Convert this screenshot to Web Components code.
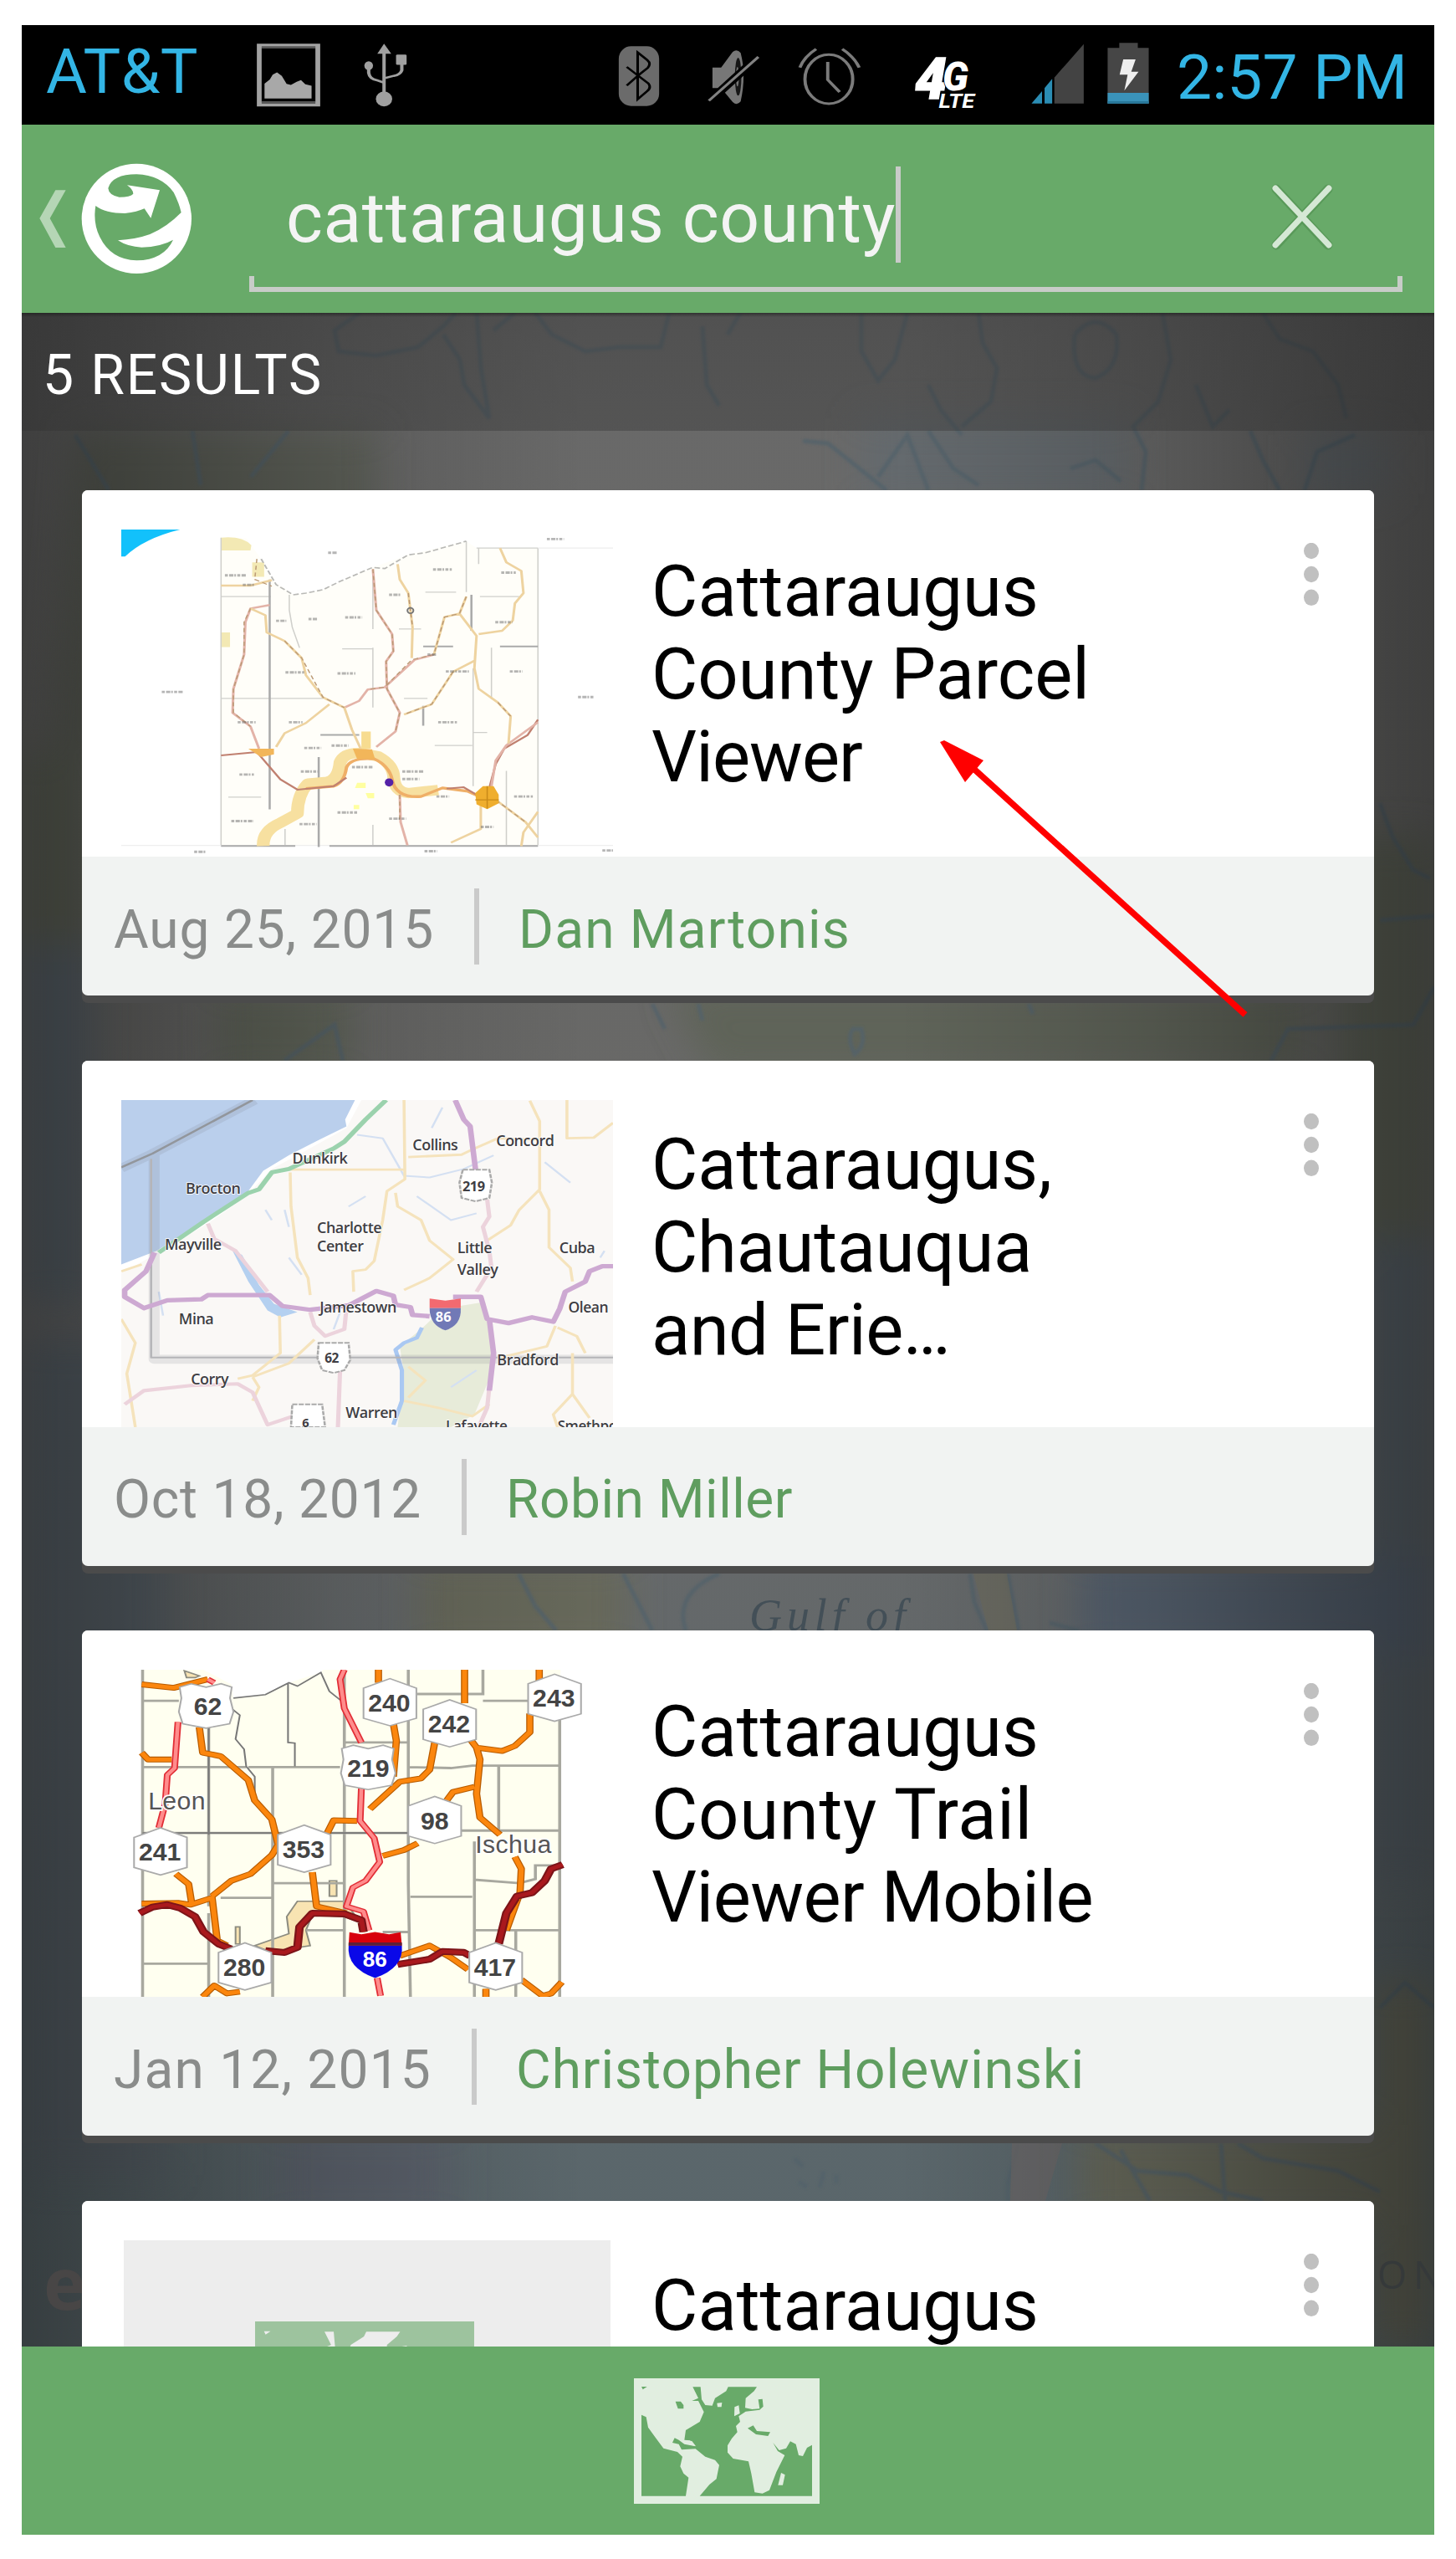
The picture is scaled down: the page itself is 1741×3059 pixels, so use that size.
<!DOCTYPE html>
<html lang="en">
<head>
<meta charset="utf-8">
<title>Search results</title>
<style>
  html, body { margin: 0; background: #fff; }
  body { font-family: Roboto, "Liberation Sans", sans-serif; }
</style>
</head>
<body>
<phone-screen></phone-screen>

<script>
const define = (name, html, after) => {
  const tpl = document.createElement('template');
  tpl.innerHTML = html;
  customElements.define(name, class extends HTMLElement {
    connectedCallback() {
      if (this.shadowRoot) return;
      this.attachShadow({ mode: 'open' }).appendChild(tpl.content.cloneNode(true));
      if (after) after.call(this, this.shadowRoot);
    }
  });
};

/* One line of text, tracked so that it fills the given width. */
define('fit-text', `
<style>
  :host { display: flex; flex: none; line-height: 1; }
  span { display: block; flex: none; white-space: nowrap; line-height: 1; }
</style><span><slot></slot></span>`, function (root) {
  const size = this.getAttribute('size'), width = +this.getAttribute('w');
  this.style.fontSize = size + 'px';
  this.style.width = width + 'px';
  this.style.height = size + 'px';
  const span = root.querySelector('span');
  const gap = (width - span.getBoundingClientRect().width) / this.textContent.length;
  span.style.letterSpacing = gap.toFixed(3) + 'px';
});

define('status-bar', `
<style>
  :host { display: flex; height: 119px; background: #000; align-items: flex-start; color: #33b5e5; }
  svg { flex: none; height: 100px; margin-top: 10px; display: block; }
  .carrier { margin: 18px 0 0 29px; }
  .clock { margin: 25px 0 0 33px; }
  text { font-family: Roboto, sans-serif; font-weight: 900; font-style: italic; fill: #fff; }
</style>
<fit-text class="carrier" size="75" w="182">AT&amp;T</fit-text>
<svg style="margin-left:70px" width="76" viewBox="534.8 112 132.4 280" preserveAspectRatio="none">
  <path fill="#a2a2a2" fill-rule="evenodd" d="M535 146H667V356H535ZM545 161H657V340H545Z"/>
  <path fill="#565656" d="M545 155H657V161H545ZM545 339H657V347H545Z"/>
  <path fill="#a8a8a8" d="M551 330V280L562 266L568 250L577 242L587 254L597 281L606 284L618 274L627 268L636 282L649 287V330Z"/>
</svg>
<svg style="margin-left:52px" width="52" viewBox="757.8 112 90.6 280" preserveAspectRatio="none">
  <g fill="none" stroke="#a0a0a0" stroke-width="7"><path d="M800 165V320M768 222V244Q770 264 784 268L800 277M837 205V235Q834 250 820 254L800 262"/></g>
  <g fill="#a0a0a0"><path d="M800 146L815 180H786Z"/><ellipse cx="768" cy="220" rx="9" ry="15"/><rect x="825" y="183" width="22" height="34" rx="3"/><ellipse cx="800" cy="331" rx="17" ry="25"/></g>
</svg>
<svg style="margin-left:252px" width="50" viewBox="44 0 115 300" preserveAspectRatio="none">
  <rect x="46" y="46" width="111" height="214" rx="34" ry="44" fill="#6b6b6b"/>
  <path fill="none" stroke="#000" stroke-width="7" d="M68 120L98 150L128 180Q136 195 124 207L98 236V68L124 95Q136 108 126 123L98 152L68 187"/>
</svg>
<svg style="margin-left:56px" width="64" viewBox="288 0 148 300" preserveAspectRatio="none">
  <path fill="#777" d="M304 122H328L360 66Q372 54 382 70Q398 150 382 244Q372 260 360 246L328 196H304Z"/>
  <ellipse cx="375" cy="155" rx="9" ry="68" fill="#161616"/><ellipse cx="373" cy="155" rx="4" ry="35" fill="#777"/>
  <path stroke="#000" stroke-width="26" d="M298 240L432 82"/><path stroke="#828282" stroke-width="8" d="M294 241L431 84"/>
</svg>
<svg style="margin-left:44px" width="77" viewBox="537 0 178 300" preserveAspectRatio="none">
  <g fill="none" stroke="#7b7b7b" stroke-width="9"><ellipse cx="625" cy="164" rx="66" ry="88"/><path d="M622 102V166L655 210M545 122Q558 82 590 56M709 122Q694 82 662 56"/></g>
</svg>
<svg style="margin-left:64px" width="80" viewBox="862 0 184.5 300" preserveAspectRatio="none">
  <text transform="translate(862 233) scale(.77 1)" font-size="204" stroke="#fff" stroke-width="4">4</text>
  <text transform="translate(938 203) scale(.74 1)" font-size="146" stroke="#000" stroke-width="5" paint-order="stroke">G</text>
  <text transform="translate(928 268) scale(.9 1)" font-size="70" style="font-weight:700" stroke="#000" stroke-width="6" paint-order="stroke">LTE</text>
</svg>
<svg style="margin-left:58px" width="64" viewBox="1180.7 0 147.6 300" preserveAspectRatio="none">
  <path fill="#434343" d="M1247 251V158L1328 38V251Z"/><path fill="#2b8db4" d="M1184 251L1213 207V251ZM1220 251V196L1241 163V251Z"/>
</svg>
<svg style="margin-left:28px" width="50" viewBox="1393 0 115 300" preserveAspectRatio="none">
  <path fill="#464646" d="M1394 52H1426V34H1477V52H1507V251H1394Z"/><path fill="#3a93ba" d="M1394 213H1507V251H1394Z"/><path fill="#28779a" d="M1394 243H1507V251H1394Z"/>
  <path fill="#eee" d="M1437 93H1471L1459 137H1479L1440 205L1449 148H1427Z"/>
</svg>
<fit-text class="clock" size="75" w="276">2:57 PM</fit-text>`);

define('search-header', `
<style>
  :host { display: flex; height: 225px; background: #68aa69; align-items: flex-start; }
  .logo { width: 215px; height: 220px; margin-top: 1px; flex: none; display: block; }
  .field { width: 1379px; height: 200px; margin-left: 57px; display: flex; flex-direction: column; flex: none; }
  .row { display: flex; flex: 1; align-items: flex-start; }
  .row fit-text { margin: 70px 0 0 44px; color: #f4f4f4; }
  .caret { width: 6px; height: 115px; margin-top: 50px; background: #c9cbc9; }
  .line { box-sizing: border-box; height: 19px; border: 6px solid #c8ccc8; border-top: 0; }
  .clear { width: 90px; height: 95px; margin: 60px 75px 0 auto; }
</style>
<svg class="logo" viewBox="0 0 645 660">
  <path fill="#b5d6b5" d="M121 232H158L101 333L158 438H121L64 333Z"/>
  <circle cx="412" cy="334" r="197" fill="#fff"/>
  <path fill="#68aa69" d="M265 288Q300 315 370 315Q415 310 440 298L463 332L495 232L378 214Q400 230 400 245Q390 257 350 257Q312 250 310 225Q325 175 412 175Q500 178 545 240Q565 280 572 312Q520 365 460 390Q410 408 345 412Q380 435 430 437Q500 435 543 410Q510 482 412 484Q320 482 280 400Q255 350 265 288Z"/>
</svg>
<div class="field">
  <div class="row">
    <fit-text size="84" w="729">cattaraugus county</fit-text><div class="caret"></div>
    <svg class="clear" viewBox="1513 209 90 95"><g fill="none" stroke-linecap="round"><path stroke="#4c8a4d" stroke-opacity=".55" stroke-width="11" d="M1527 226L1589 293M1589 226L1527 293"/><path stroke="#d5e8d5" stroke-width="7" d="M1526 225L1590 293M1590 225L1526 293"/></g></svg>
  </div>
  <div class="line"></div>
</div>`);

define('world-icon', `
<style>:host { display: block; } svg { display: block; width: 100%; }</style>
<svg viewBox="54 69 666 450">
  <path fill="var(--land)" d="M54 69H720V519H54Z"/>
  <g fill="var(--sea)"><path d="M81 200L98 208L105 245L130 280L160 320L210 333L228 350L220 385L232 410L250 425L240 491H81Z"/>
  <path d="M265 100H293L297 145L310 165L335 167L345 140L385 115L392 100H495L485 115L455 140L453 175L478 180L505 178L500 145L515 143L518 170L505 182L455 188L430 205L435 225L420 240L425 262L405 285L390 310V335L410 357L465 367L475 410L487 478L515 482L540 470L565 405L595 345L570 330L553 300L575 327L600 320L615 295L635 305L645 345L660 348L675 318L693 308V491H290L325 450L350 430L360 380L345 362L310 350L275 322L225 325L215 305L192 300L200 283L215 290L235 305L275 313L255 292L235 290L240 255L290 225L305 190L285 150L262 150L285 140Z"/>
  <path d="M462 248L482 238L495 258L543 262L535 276L492 270ZM203 152H222L232 165V178H212ZM81 99H101L86 109Z"/></g>
  <g fill="var(--land)"><path d="M415 172L430 166L434 195L414 205ZM352 158L370 156L368 172L354 172ZM582 408L596 415L588 452H571ZM238 292L262 294L276 312L250 306Z"/></g>
</svg>`);

define('bottom-bar', `
<style>
  :host { display: flex; height: 225px; background: #68aa69; align-items: center; justify-content: center; }
  world-icon { width: 222px; --land: #e1eee0; --sea: #68aa69; margin: 0 3px 0 0; }
</style><world-icon></world-icon>`);

define('result-card', `
<style>
  :host { display: block; flex: none; width: 1545px; height: 604px; border-radius: 7px; background: #f1f3f2; box-shadow: 0 9px 0 #4b4b4b; overflow: hidden; }
  .body { height: 438px; box-sizing: border-box; background: #fff; display: flex; align-items: flex-start; padding-left: 47px; }
  .thumb { width: 588px; height: 391px; margin-top: 47px; flex: none; overflow: hidden; }
  .title { display: flex; flex-direction: column; gap: 14px; margin-left: 46px; padding-top: var(--title-top, 79px); color: #000; }
  .dots { width: 18px; height: 75px; margin: 63px 66px 0 auto; fill: #c0c0c0; }
  .foot { height: 166px; display: flex; align-items: flex-start; padding-left: 38px; }
  ::slotted([slot=date]) { margin: 55.5px 48px 0 0; color: #8a8c8b; }
  ::slotted([slot=author]) { margin: 55.5px 0 0 47px; color: #5f9d5f; }
  .rule { width: 6px; height: 91px; margin-top: 38px; background: #cacaca; }
</style>
<div class="body">
  <div class="thumb"><slot name="thumb"></slot></div>
  <div class="title"><slot></slot></div>
  <svg class="dots" viewBox="0 0 18 75"><ellipse cx="9" cy="9.5" rx="9" ry="9.7"/><ellipse cx="9" cy="37.5" rx="9" ry="9.7"/><ellipse cx="9" cy="65.3" rx="9" ry="9.7"/></svg>
</div>
<div class="foot"><slot name="date"></slot><div class="rule"></div><slot name="author"></slot></div>`);

const thumbStyle = `<style>:host { display: block; } svg { display: block; width: 588px; height: 391px; } text { font-family: "Open Sans", sans-serif; }</style>`;
const label = (x, y, size, str, extra = '') => `<text transform="translate(${x} ${y}) scale(.8 1)" font-size="${size}" ${extra}>${str}</text>`;

/* Parcel viewer thumbnail */
const marks = [[370,288,50],[412,316,26],[858,271,44],[1018,280,34],[755,345,28],[490,421,24],[566,416,20],[652,411,40],[1004,425,40],[512,572,44],[634,575,42],[888,569,54],[1038,569,30],[400,718,42],[520,718,32],[870,718,44],[222,629,50],[1198,644,38],[620,786,40],[556,793,40],[668,849,48],[786,862,50],[786,884,40],[404,871,34],[385,1007,52],[545,1016,40],[634,982,46],[755,1000,40],[970,1024,30],[1048,935,44],[866,935,30],[1125,182,40],[612,222,22],[298,1097,28],[838,1095,30],[1255,1093,25],[845,520,22],[548,862,40]];
define('thumb-parcels', thumbStyle + `
<svg viewBox="127 154 1153 957" preserveAspectRatio="none">
  <path fill="#fff" d="M127 154H1280V1111H127Z"/><path fill="#12c1fb" d="M127 154H265Q180 180 136 233H127Z"/>
  <path fill="#fffef9" d="M361 178L420 180L455 240L480 300L530 345L600 330L716 265L800 228L936 188L960 208H1104V1080H361Z"/>
  <path fill="#f3e9b4" d="M361 178Q410 172 432 200L430 215H361ZM434 250H462V292H434ZM360 455H382V498H360Z"/>
  <g fill="none" stroke="#cfcfcb" stroke-width="3"><path d="M361 178V1080M1104 208V1080M960 208H1104M965 208V255M361 350H478M361 648H600M717 275V445M717 500V675M645 503H717M840 337H912M936 337V188M968 350H1060M995 500V650M952 560V905M862 786H950M952 748H985M1030 860V1080M717 1018V1080M511 1030V1080M378 937H455M778 445H830M790 648H845M521 345V390L528 440L545 500"/><path stroke="#eee" d="M127 1078H1280M1104 208H1280"/><path stroke="#aaa" stroke-width="5" d="M475 300V973M590 820V1083M1015 496H1104M835 496H905M361 1080H535M615 1080H1104M594 755H685M835 670V728M948 345V450"/></g>
  <path fill="none" stroke="#b9b9b6" stroke-width="4" stroke-dasharray="13 6" d="M455 240L490 315L530 345L560 340L600 330L636 308L716 265L745 268L800 228L840 222L936 188"/>
  <g fill="none" stroke-linejoin="round">
    <path stroke="#f7e0a0" stroke-width="30" d="M460 1080Q458 1035 500 1012L540 985Q540 930 565 897L610 892Q636 885 640 835Q650 805 690 808L730 818Q765 842 766 880Q768 922 800 925L870 916"/>
    <path stroke="#efaf68" stroke-width="8" d="M560 912L625 905Q650 895 655 850Q665 820 720 825Q755 845 762 885Q770 940 830 935L880 910L940 920L985 945"/>
    <path stroke="#c08070" stroke-width="5" d="M361 815L445 805L500 885L540 915L625 905L655 880M890 912L930 908L960 930L990 910L1005 840L1025 795L1080 755L1104 710"/>
    <path stroke="#e3b3a8" stroke-width="6" d="M475 375L430 385L418 425L415 520L390 620L388 690L430 730L450 795M717 270L725 390L762 460L765 510L748 540L750 620L780 690L770 745L725 790M745 615L815 535L860 520M748 615L705 622L685 655L650 675M780 930L782 1010L798 1078M1104 718L1030 785L1005 830L995 905"/>
    <path stroke="#eed3a0" stroke-width="6" d="M430 385L465 405L468 455L510 480L550 530L560 580L600 645L650 675L668 740L690 800M775 255L780 300L800 340L810 440L808 530M936 350L920 400L885 410L860 520M920 400L960 465L955 560L965 620L1010 660L1040 700L1035 780M1015 208L1030 250L1065 275L1070 340L1050 370L1045 420L1020 450L965 460M955 538L905 570L855 665L790 695M615 665L560 720L510 750L490 790M970 960L970 1030L900 1070M1005 945L1075 1010L1104 1055M1104 980L1070 1040L1065 1080M361 318H430L480 302"/>
    <path stroke="#bb9a76" stroke-width="3" stroke-dasharray="12 8" d="M445 240L440 300L480 320M430 385L415 425V520L390 620V690L430 730M510 480L550 530L600 645L650 675M717 270L725 390L762 460L765 510L748 540L750 620L780 690L770 745M936 350L920 400L885 410L860 520L808 535L745 615L705 622M905 570L855 665L790 695M780 930V1010M800 340L810 440M1010 660L1040 700M1005 945L1075 1010"/>
  </g>
  <path fill="#efae2e" d="M957 925L975 905H1000L1012 930V955L985 972L960 958Z"/><path fill="#f2b65a" d="M425 795H485V812L455 820ZM670 795L715 797L722 825H680Z"/><path fill="#f7dc90" d="M690 745H712V795H690Z"/>
  <path stroke="#c98a18" stroke-width="3" d="M985 905V970M957 945H1012"/>
  <path fill="#ffffa0" d="M680 895H700V910H675ZM700 925H720V940H705ZM672 960H685V972H672Z"/>
  <ellipse cx="755" cy="894" rx="10" ry="12" fill="#5522a8"/><ellipse cx="805" cy="391" rx="7" ry="8" fill="none" stroke="#777" stroke-width="4"/>
  <g stroke="#6d6d6d" stroke-width="7" stroke-dasharray="7 3 10 2 4 3" opacity=".5">${marks.map(m => `<path d="M${m[0]} ${m[1]}h${m[2]}"/>`).join('')}</g>
</svg>`);

/* Lake Erie road map thumbnail */
define('thumb-erie', thumbStyle + `
<svg viewBox="127 158 1153 959" preserveAspectRatio="none">
  <path fill="#faf8f6" d="M127 158H1280V1117H127Z"/>
  <path fill="#fff" d="M127 158H690L655 240L540 320L480 360L420 440L330 520L215 605L127 665Z"/>
  <path fill="#bacfec" d="M127 158H675L652 215L655 235L590 275L520 320L460 365L425 425L330 505L210 600L127 640Z"/>
  <path fill="#e7ebd9" d="M830 830L880 770L980 750L1000 860L995 960L955 1080L900 1117H775L790 960L780 880Z"/>
  <path fill="#b4d0f0" d="M388 600L410 612L450 700L485 755L540 780L500 795L470 775L425 690Z"/>
  <g fill="none" stroke-linejoin="round">
    <path stroke="#a9c8f2" stroke-width="10" d="M832 825L820 855L790 870L770 890L785 950L785 1040L765 1110"/>
    <path stroke="#d4e0f2" stroke-width="5" d="M680 260L740 270L790 380L850 385L930 360L1000 320M855 240L880 180M465 480L480 510M510 480L520 530M520 620L550 670M640 780L625 830M215 720L225 790M700 440L660 470M820 440L900 510L960 490M1120 340L1180 400M900 1000L960 950M1250 620L1260 600"/>
    <path stroke="#6f7482" stroke-opacity=".15" stroke-width="26" d="M127 358L200 315L440 158M204 320V918H1280"/>
    <path stroke="#92969c" stroke-width="6" d="M127 355L200 315L435 158"/><path stroke="#b5b5b8" stroke-width="5" d="M197 330V913H1280"/>
    <path stroke="#f5e3bc" stroke-width="7" d="M790 158L792 390L750 425L740 510L720 630L700 655L670 660L672 720M523 370L525 470L540 620L565 680L570 730M523 362H790M770 430L775 470L830 510L850 570L905 625L850 680L790 715M800 325L925 318L955 300L1010 270L1110 275M1085 160L1108 220L1108 420L1060 480L1040 525L985 570M1108 425L1130 480L1130 590L1180 650L1185 690M1172 158V270L1235 268L1280 225M498 790L500 900L435 965L400 975M435 970L450 1000L435 1040M127 660L175 640M127 800L160 870L140 960L160 1117M1145 820L1125 880L1010 915M1150 825L1195 850L1215 900M1185 900L1185 1020L1140 1080L1150 1117M1185 1020L1225 1090M800 940L840 980L800 1030M790 1040L870 1060L950 1085L990 1050M435 970L520 930L580 860"/>
    <path stroke="#ecd3dc" stroke-width="10" d="M330 520L345 565L395 600L445 680L470 720M985 450L990 500L975 530L990 600L995 650L960 720M570 780L580 820L605 850L650 830L655 770M640 950L635 1117M135 1050L180 1010L290 995L400 990L435 1015L470 1110L530 1085M990 1000L985 1060L965 1117"/>
    <path stroke="#cda9d2" stroke-width="13" d="M205 605L185 660L135 715V735L180 768L235 745L315 742L330 730L475 730L505 762L570 773L660 760L725 718L765 732L770 758L805 765L810 788L850 792M910 158L930 215L945 235L958 365M905 735H970L985 800L1035 812L1090 795L1140 808L1155 770L1168 720L1215 690L1225 660L1255 645H1280M990 800L1000 900L990 1010"/>
    <path stroke="#9bd2ad" stroke-width="12" d="M748 158L700 215L650 280L625 300L520 360L480 370L450 420L425 430L320 515L215 605"/>
  </g>
  <g fill="#fff" stroke="#aaa" stroke-width="5" stroke-dasharray="12 3"><path d="M928 362H990L996 400L990 445L958 455L925 445L920 400Z"/><path d="M590 870H660L664 920L650 950L625 958L598 950L587 915Z"/><path d="M528 1050H598L605 1117H525Z"/></g>
  <path fill="#f26a70" d="M850 740L887 746L923 740V768H850Z"/><path fill="#7179b6" d="M850 768H923Q925 818 887 833Q850 818 850 768Z"/>
  <g fill="#3f3e43" stroke="#fff" stroke-width="4" paint-order="stroke" font-weight="600" letter-spacing="-1.2">
  ${label(528,345,44,'Dunkirk')}${label(278,432,44,'Brocton')}${label(810,305,44,'Collins')}${label(1006,294,44,'Concord')}${label(586,547,44,'Charlotte')}${label(586,603,44,'Center')}${label(229,597,44,'Mayville')}${label(915,608,44,'Little')}${label(915,670,44,'Valley')}${label(1154,608,44,'Cuba')}${label(592,780,44,'Jamestown')}${label(1175,782,43,'Olean')}${label(262,815,44,'Mina')}${label(1008,935,44,'Bradford')}${label(290,992,44,'Corry')}${label(653,1091,44,'Warren')}${label(888,1130,42,'Lafayette')}${label(1150,1130,42,'Smethport')}
  ${label(927,425,40,'219','font-weight="700"')}${label(604,929,38,'62','font-weight="700"')}${label(551,1117,36,'6','font-weight="700"')}</g>
  ${label(864,808,40,'86','font-weight="700" fill="#fff"')}
</svg>`);

/* Trail viewer thumbnail */
const hex = (x, y, n) => `<path fill="#fff" stroke="#aaa" stroke-width="4" d="M${x - 62} ${y - 42}L${x} ${y - 70}L${x + 62} ${y - 42}V${y + 46}L${x} ${y + 68}L${x - 62} ${y + 46}Z"/>` + label(x - (n.length > 2 ? 51 : 33), y + 26, 74, n, 'class="n"');
const us = (x, y, n) => `<path fill="#fff" stroke="#aaa" stroke-width="4" d="M${x - 62} ${y - 52}L${x - 35} ${y - 62}L${x} ${y - 52}L${x + 35} ${y - 62}L${x + 60} ${y - 52}L${x + 56} ${y - 20}L${x + 64} ${y + 20}L${x + 55} ${y + 55}L${x} ${y + 68}L${x - 55} ${y + 55}L${x - 64} ${y + 20}L${x - 58} ${y - 20}Z"/>` + label(x - (n.length > 2 ? 49 : 29), y + 30, 74, n, 'class="n"');
const orange = 'M175 180L250 190L330 165M175 380L190 400H245M310 305L318 380L360 390L425 460L440 520L480 575L495 650L480 680L430 735L385 755L340 800M255 735L285 765L292 820M175 822L260 820L290 825L340 805L352 930L375 945M730 137V175M765 295L772 345L765 450M932 137V235M1107 137V180M1085 265V320L1050 360L1020 375L960 365L945 340M862 350L850 430L830 455L780 465L710 545M960 365L968 400L960 500L968 570L1015 620M890 520L905 495L955 480M822 645L790 665L740 682M610 615L625 578L680 580M575 730L585 830L655 850M1050 685L1065 720L1062 790L1030 900M780 975L850 945L900 980L940 1015M1065 1045L1115 1092L1135 1085L1160 1052M318 1095L345 1062L375 1085L405 1080M982 1072V1095';
const reds = 'M650 137L640 165L650 250L690 350M260 290L252 425L235 445L230 530L215 600M690 485L687 580L720 630L733 700L700 755L670 775L655 830L695 845L708 900M727 1040L735 1092M330 165L345 175';
const maroon = 'M170 850L200 832L235 825L265 835L300 860L320 905L355 940L385 955M465 960L510 965L540 950L545 890L575 850L650 852L690 870L695 905M775 1000L850 985L880 962L930 965L945 975M1012 940L1030 850L1055 800L1090 790L1120 755L1135 720L1162 708';
define('thumb-trails', thumbStyle.replace('</style>', ' text.n { font-family: "Liberation Sans", sans-serif; font-weight: 700; fill: #444; }</style>') + `
<svg viewBox="127 137 1153 958" preserveAspectRatio="none">
  <path fill="#fff" d="M127 137H1280V1095H127Z"/>
  <path fill="#fffff0" d="M177 137H320L385 180L390 220L465 210L520 175L595 145L600 137H1157V1095H177Z"/>
  <path fill="#f8e4b2" stroke="#8c8c80" stroke-width="4" d="M275 140L310 155L300 160H280ZM440 945L520 910L515 860L540 815H650L690 880L650 860L575 855L560 900L570 945L545 950L480 965ZM615 755H632V800H615ZM395 890H405V940H395Z"/>
  <g fill="none" stroke="#a8a89f" stroke-width="7"><path d="M177 137V1095M1155 240V1095M177 228H262M177 422H330M330 422H420M425 422H640M800 422L900 425L950 418H1155M332 300V830M332 850V1095M482 425V1095M650 137V1095M800 137V760L805 1095M177 615H800M920 608H1155M955 640V1095M1012 420V605M482 762H650M360 805H482M805 802H950M177 998H332M650 350H800M820 208H975V137M975 228H1155M955 752L1060 762L1098 750V710H1155M955 900H1155M1052 900V1095M560 900H650M800 905H740"/><path stroke="#777" stroke-width="4" d="M390 220L465 210L520 175L540 185L595 145L615 200L645 230M518 175V350L534 352V420M385 250L405 270L395 340L415 370L420 420L440 450V500M177 615H800M332 230V620"/></g>
  <g fill="none" stroke-linejoin="round"><path stroke="#b85c00" stroke-width="17" d="${orange}"/><path stroke="#fb860d" stroke-width="12" d="${orange}"/>
  <path stroke="#e12d35" stroke-width="16" d="${reds}"/><path stroke="#ff8c8c" stroke-width="9" d="${reds}"/>
  <path stroke="#7c1418" stroke-width="20" d="${maroon}"/><path stroke="#a9191d" stroke-width="11" d="${maroon}"/></g>
  <g fill="#555" stroke="#fff" stroke-width="8" paint-order="stroke">${label(190,547,74,'Leon','style="font-family:Liberation Sans;letter-spacing:1px"')}${label(957,674,74,'Ischua','style="font-family:Liberation Sans;letter-spacing:1px"')}</g>
  ${us(326,240,'62')}${us(706,420,'219')}${hex(757,233,'240')}${hex(897,295,'242')}${hex(1143,220,'243')}${hex(862,578,'98')}${hex(219,670,'241')}${hex(556,662,'353')}${hex(417,1007,'280')}${hex(1005,1007,'417')}
  <path fill="#d8000c" d="M662 906L690 912L722 905L755 912L782 906L785 945H660Z"/><path fill="#0a08e8" d="M660 945H785Q790 1010 722 1040Q655 1010 660 945Z"/><path fill="#5b2038" d="M660 936H785V945H660Z"/>
  ${label(693,1007,64,'86','style="font-family:Liberation Sans;font-weight:700;fill:#fff"')}
</svg>`);

define('thumb-placeholder', `
<style>
  :host { display: flex; width: 582px; height: 391px; margin-left: 3px; background: #ededed; justify-content: center; align-items: flex-start; }
  world-icon { width: 262px; margin: 97px 6px 0 0; --land: #9dc39e; --sea: #ededed; }
</style><world-icon></world-icon>`);

/* Dimmed basemap behind the results */
define('dim-basemap', `
<style>:host { display: block; overflow: hidden; } svg { display: block; width: 1689px; height: 2431px; }</style>
<svg viewBox="26 374 1689 2431">
  <defs>
    <linearGradient id="h"><stop offset="0" stop-opacity=".4"/><stop offset=".08" stop-opacity=".31"/><stop offset=".22" stop-opacity=".13"/><stop offset=".4" stop-opacity="0"/><stop offset=".62" stop-opacity="0"/><stop offset=".8" stop-opacity=".15"/><stop offset=".92" stop-opacity=".31"/><stop offset="1" stop-opacity=".4"/></linearGradient>
    <linearGradient id="v" x1="0" y1="0" x2="0" y2="1"><stop offset="0" stop-color="#696969"/><stop offset=".3" stop-color="#686866"/><stop offset=".5" stop-color="#696969"/><stop offset=".68" stop-color="#63686a"/><stop offset=".85" stop-color="#5a666b"/><stop offset="1" stop-color="#5b676b"/></linearGradient>
    <filter id="b" x="-30%" y="-30%" width="160%" height="160%"><feGaussianBlur stdDeviation="22"/></filter>
    <filter id="s"><feGaussianBlur stdDeviation="1.5"/></filter>
  </defs>
  <path fill="url(#v)" d="M26 374H1715V2805H26Z"/>
  <g filter="url(#b)">
    <path fill="#64696d" d="M1030 500H1350V600H1030ZM1560 520H1660V590H1560Z"/><path fill="#5d6058" d="M90 515H450V900H60Z"/>
    <path fill="#5f6458" d="M800 1180H1560V1280H850ZM1600 1000H1715V1500H1600ZM26 900H110V1170H26ZM260 1180H420V1290H260Z"/>
    <path fill="#5a636b" d="M26 1130H110V1560H26ZM26 1600H200V2600H26ZM1630 1480H1715V2250H1630Z"/><path fill="#566270" d="M1290 1860H1715V1980H1290Z"/>
    <path fill="#66675a" d="M500 1860H750V1980H500ZM1290 2540H1715V2660H1290ZM1640 2370H1715V2805H1640Z"/>
    <path fill="#5a606a" d="M330 2540H540V2660H330Z"/>
  </g>
  <g fill="none" stroke="#52626b" stroke-width="5" opacity=".8" filter="url(#s)">
    <path d="M430 374L400 395L405 420L450 425L500 415L530 390L545 374M530 400L550 430L555 460L585 500L575 440L570 374M590 395L615 374M640 374L660 400L700 420L740 415L790 415L800 374M840 390L845 460L860 485M870 400L885 374M1030 374V420L1050 455L1070 430L1085 374M1170 374L1175 410L1192 440L1185 480L1150 510M1110 460L1125 490L1150 520M1285 400Q1280 450 1310 452Q1340 440 1335 400Q1310 370 1285 400M1390 374L1400 430L1385 480L1355 510L1370 540L1365 586M1510 374L1530 405L1570 420L1600 460L1610 500M1430 460L1450 510L1470 490M960 527L990 530L1040 570L1060 586M1050 570L1085 520L1110 586M1110 515L1140 560L1170 580M1280 560L1310 550L1340 575M1495 515L1510 550L1530 586M1560 586L1575 540L1620 520M230 515L240 580M300 570L345 515M90 520L130 586"/>
    <path d="M1650 960L1665 1000L1690 1040L1710 1050M1650 1100L1715 1095M1520 1268L1540 1230L1690 1225L1715 1180M780 1200L795 1230M835 1200L840 1220M1230 1200L1235 1212M1020 1230Q1012 1240 1022 1260Q1036 1250 1030 1230ZM340 1268L400 1225L410 1268"/>
    <path d="M745 1881L780 1949M820 1949Q805 1905 860 1881M1160 1881L1165 1915L1180 1949M1205 1881L1218 1949M1255 1940L1290 1949M620 1881L640 1920L665 1949M1218 2562L1205 2610V2631M1310 2562L1360 2595L1420 2600L1460 2620L1510 2631M1340 2570L1375 2631M1480 2562L1510 2580L1600 2595L1650 2620M1460 2562L1465 2631M950 2580L960 2590M955 2608L965 2614M985 2596L980 2615M1000 2600V2610M1650 2400L1680 2370L1715 2400"/>
  </g>
  <path fill="#6d6b5c" d="M1164 1881H1204L1216 1949H1182Z" opacity=".6"/><path fill="#6b6767" d="M1210 2562H1270L1250 2631H1208Z" opacity=".7"/>
  <path fill="url(#h)" d="M26 374H1715V2805H26Z"/>
  <text x="896" y="1949" font-family="Liberation Serif" font-style="italic" font-size="54" letter-spacing="5" textLength="192" fill="#434f57">Gulf of</text>
  <text x="52" y="2761" font-family="Open Sans" font-weight="700" font-size="86" fill="#484646">e</text>
  <text x="1647" y="2736" font-family="Open Sans" font-size="45" letter-spacing="8" fill="#35393a">ON</text>
</svg>`);

define('results-pane', `
<style>
  :host { display: grid; grid-template: 2431px / 1689px; overflow: hidden; }
  dim-basemap, .front { grid-area: 1 / 1; min-height: 0; }
  .front { display: flex; flex-direction: column; z-index: 1; overflow: hidden; }
  .count { box-sizing: border-box; flex: none; height: 141px; padding: 42px 0 0 25px; color: #fff;
    background: linear-gradient(rgba(30,30,30,.75), rgba(48,48,48,.42) 5px, rgba(48,48,48,.4) 30px, rgba(48,48,48,.36)); }
  .list { display: flex; flex-direction: column; gap: 77.7px; padding: 71px 0 0 72px; flex: 1; min-height: 0; }
</style>
<dim-basemap></dim-basemap>
<div class="front">
  <div class="count"><fit-text size="66" w="335">5 RESULTS</fit-text></div>
  <div class="list">
    <result-card>
      <thumb-parcels slot="thumb"></thumb-parcels>
      <fit-text size="85" w="463">Cattaraugus</fit-text><fit-text size="85" w="524">County Parcel</fit-text><fit-text size="85" w="252">Viewer</fit-text>
      <fit-text slot="date" size="64" w="383">Aug 25, 2015</fit-text><fit-text slot="author" size="64" w="397">Dan Martonis</fit-text>
    </result-card>
    <result-card style="--title-top:82.5px">
      <thumb-erie slot="thumb"></thumb-erie>
      <fit-text size="85" w="479">Cattaraugus,</fit-text><fit-text size="85" w="455">Chautauqua</fit-text><fit-text size="85" w="357">and Erie…</fit-text>
      <fit-text slot="date" size="64" w="368">Oct 18, 2012</fit-text><fit-text slot="author" size="64" w="343">Robin Miller</fit-text>
    </result-card>
    <result-card>
      <thumb-trails slot="thumb"></thumb-trails>
      <fit-text size="85" w="463">Cattaraugus</fit-text><fit-text size="85" w="456">County Trail</fit-text><fit-text size="85" w="528">Viewer Mobile</fit-text>
      <fit-text slot="date" size="64" w="380">Jan 12, 2015</fit-text><fit-text slot="author" size="64" w="680">Christopher Holewinski</fit-text>
    </result-card>
    <result-card style="--title-top:82.5px">
      <thumb-placeholder slot="thumb"></thumb-placeholder>
      <fit-text size="85" w="463">Cattaraugus</fit-text>
    </result-card>
  </div>
</div>`);

/* Red annotation arrow drawn over the first card */
define('callout-arrow', `
<style>:host { position: absolute; left: 1118px; top: 876px; width: 382px; height: 350px; z-index: 5; } svg { display: block; }</style>
<svg width="382" height="350" viewBox="1118 876 382 350">
  <path stroke="#f00" stroke-width="7.5" d="M1150 906L1489 1213"/><path fill="#f00" d="M1124 887L1129 885L1176 909L1154 935Z"/>
</svg>`);

define('phone-screen', `
<style>
  :host { display: block; box-sizing: border-box; width: 1741px; height: 3059px; padding: 30px 26px 0; position: relative; overflow: hidden; }
  main { display: flex; flex-direction: column; width: 1689px; height: 3000px; }
</style>
<main>
  <status-bar></status-bar>
  <search-header></search-header>
  <results-pane></results-pane>
  <bottom-bar></bottom-bar>
</main>
<callout-arrow></callout-arrow>`);
</script>
</body>
</html>
